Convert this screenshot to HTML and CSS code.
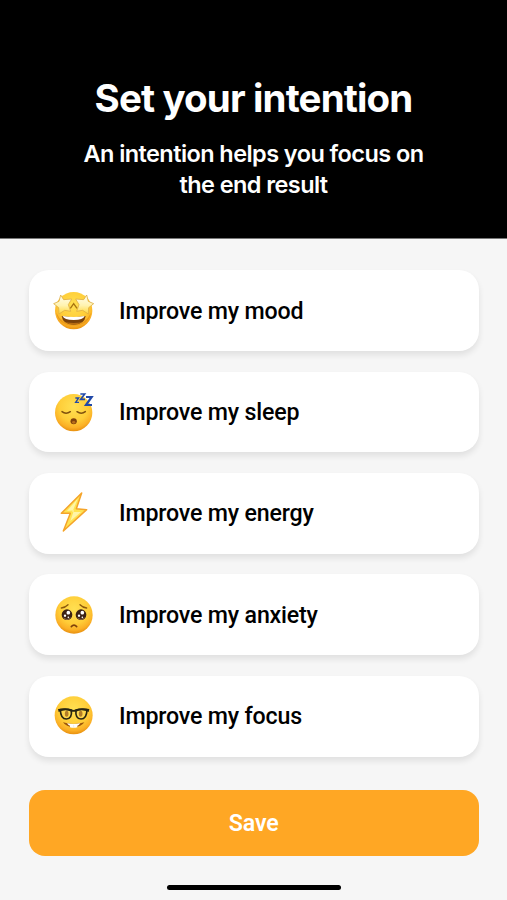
FILE: index.html
```html
<!DOCTYPE html>
<html lang="en">
<head>
    <meta charset="UTF-8">
    <meta name="viewport" content="width=device-width, initial-scale=1.0">
    <title>Set your intention</title>
    <link rel="stylesheet" href="styles.css">
</head>
<body>
    <!-- Shared gradients for the emoji -->
    <svg class="defs" width="0" height="0" aria-hidden="true">
        <defs>
            <radialGradient id="face" cx="0.5" cy="0.34" r="0.66">
                <stop offset="0" stop-color="#ffe052"/>
                <stop offset="0.6" stop-color="#ffcd38"/>
                <stop offset="0.85" stop-color="#fbb026"/>
                <stop offset="1" stop-color="#e8900f"/>
            </radialGradient>
            <linearGradient id="star" x1="0" y1="0" x2="0" y2="1">
                <stop offset="0" stop-color="#fffdee"/>
                <stop offset="0.55" stop-color="#fff3b0"/>
                <stop offset="1" stop-color="#ffd83c"/>
            </linearGradient>
        </defs>
    </svg>

    <header class="header">
        <h1>Set your intention</h1>
        <p>An intention helps you focus on<br>the end result</p>
    </header>

    <main class="content">
        <div class="options">
            <button class="option">
                <svg class="emoji" viewBox="0 0 180 180">
                    <circle cx="86" cy="89" r="56" fill="url(#face)"/>
                    <path d="M34 95A56 56 0 0 0 138 95Q132 132 86 134Q40 132 34 95Z" fill="#e08a10" fill-opacity="0.6"/>
                    <path d="M50 105Q86 112 122 105Q119 130 86 131Q53 130 50 105Z" fill="#794009"/>
                    <path d="M53 105Q86 111 119 105Q115 117 86 117Q57 117 53 105Z" fill="#fff"/>
                    <path d="M62 124Q86 128 110 124Q101 131 86 131Q71 131 62 124Z" fill="#b66b12"/>
                    <path d="M47 42L56 56L80 54L70 71L77 91L59 88L42 99L41 80L26 68L42 61Z" fill="url(#star)" stroke="#dfae45" stroke-width="2.5" stroke-linejoin="round"/>
                    <path d="M125 42L116 56L92 54L102 71L95 91L113 88L130 99L131 80L146 68L130 61Z" fill="url(#star)" stroke="#dfae45" stroke-width="2.5" stroke-linejoin="round"/>
                    <path d="M76 82L86 68L96 82" fill="none" stroke="#a8730f" stroke-width="4"/>
                </svg>
                <span>Improve my mood</span>
            </button>

            <button class="option">
                <svg class="emoji" viewBox="0 0 180 180">
                    <circle cx="86" cy="92" r="56" fill="url(#face)"/>
                    <path d="M51 89Q63 98 76 89M96 89Q109 98 121 89" fill="none" stroke="#7f500e" stroke-width="4.5" stroke-linecap="round"/>
                    <ellipse cx="86" cy="118" rx="9.5" ry="9" fill="#80420c"/>
                    <ellipse cx="86" cy="121" rx="5" ry="4" fill="#b96e1a"/>
                    <g fill="none" stroke="#2149a8" stroke-linejoin="miter">
                        <path d="M91 48H101L92 61H102" stroke-width="4"/>
                        <path d="M106 36H119L107 52H120" stroke-width="5"/>
                        <path d="M123 45H140L123 69H141" stroke-width="6.5"/>
                    </g>
                </svg>
                <span>Improve my sleep</span>
            </button>

            <button class="option">
                <svg class="emoji" viewBox="0 0 180 180">
                    <path d="M110 30L49 91L76 91L55 144L125 80L94 77Z" fill="#ffe352" stroke="#f5a42a" stroke-width="4.5" stroke-linejoin="round"/>
                    <path d="M98 47L66 84L87 82L76 114L108 87L82 87Z" fill="#fff5a8"/>
                </svg>
                <span>Improve my energy</span>
            </button>

            <button class="option">
                <svg class="emoji" viewBox="0 0 180 180">
                    <circle cx="87" cy="90" r="56" fill="url(#face)"/>
                    <path d="M49 69Q60 68 69 59M105 59Q114 68 125 69" fill="none" stroke="#8d5a0c" stroke-width="4" stroke-linecap="round"/>
                    <circle cx="66" cy="89" r="16" fill="#3b2115"/>
                    <circle cx="108" cy="89" r="16" fill="#3b2115"/>
                    <path d="M54 96Q66 108 78 96Q74 104 66 104Q58 104 54 96ZM96 96Q108 108 120 96Q116 104 108 104Q100 104 96 96Z" fill="#a98058"/>
                    <g fill="#fff">
                        <circle cx="70" cy="83" r="5.5"/>
                        <circle cx="60" cy="92" r="3.5"/>
                        <circle cx="70" cy="97" r="2.5"/>
                        <circle cx="112" cy="83" r="5.5"/>
                        <circle cx="102" cy="92" r="3.5"/>
                        <circle cx="112" cy="97" r="2.5"/>
                    </g>
                    <path d="M79 125Q87 116 95 125" fill="none" stroke="#81430a" stroke-width="5" stroke-linecap="round"/>
                </svg>
                <span>Improve my anxiety</span>
            </button>

            <button class="option">
                <svg class="emoji" viewBox="0 0 180 180">
                    <circle cx="86" cy="88" r="57" fill="url(#face)"/>
                    <ellipse cx="65" cy="83" rx="5.5" ry="9" fill="#925009"/>
                    <ellipse cx="107" cy="83" rx="5.5" ry="9" fill="#925009"/>
                    <path d="M54 109Q86 119 118 109Q109 123 86 123Q63 123 54 109Z" fill="#9c560b"/>
                    <path d="M66 112Q86 116 106 112Q101 119 97 119V124Q86 127 75 124V119Q71 119 66 112Z" fill="#fff"/>
                    <path d="M86 116V125" stroke="#ddd" stroke-width="1.5"/>
                    <path d="M46 71Q62 67 79 72Q82 98 64 99Q47 99 46 71ZM126 71Q110 67 93 72Q90 98 108 99Q125 99 126 71Z" fill="#ffe36c" fill-opacity="0.3" stroke="#292612" stroke-width="5" stroke-linejoin="round"/>
                    <path d="M39 69Q62 65 86 72Q110 65 133 69L131 78L124 75Q106 69 93 77H79Q66 69 48 75L41 78Z" fill="#292612"/>
                </svg>
                <span>Improve my focus</span>
            </button>
        </div>

        <button class="save-btn">Save</button>
        <div class="home-bar"></div>
    </main>
</body>
</html>
```
FILE: styles.css
```css
* {
    margin: 0;
    padding: 0;
    box-sizing: border-box;
}

body {
    display: flex;
    flex-direction: column;
    height: 900px;
    background-color: #f6f6f6;
    font-family: 'Roboto', sans-serif;
    overflow: hidden;
}

.defs {
    position: absolute;
}

.header {
    height: 239px;
    padding-top: 74px;
    background-color: #000;
    border-bottom: 1px solid #777;
    color: #fff;
    text-align: center;
    font-family: 'Inter', sans-serif;
}

.header h1 {
    font-size: 38.5px;
    line-height: 48px;
    font-weight: 700;
    letter-spacing: -0.86px;
    white-space: nowrap;
}

.header p {
    margin-top: 16px;
    font-size: 23.5px;
    line-height: 31px;
    font-weight: 600;
    letter-spacing: -0.57px;
    white-space: nowrap;
}

.content {
    flex: 1;
    display: flex;
    flex-direction: column;
    padding: 31.3px 28.5px 0 29px;
}

.options {
    display: flex;
    flex-direction: column;
    gap: 20.6px;
}

.option {
    display: flex;
    align-items: center;
    gap: 14px;
    height: 80.8px;
    padding-left: 16px;
    border: none;
    border-radius: 20px;
    background-color: #fff;
    box-shadow: 0 4px 6px rgba(0, 0, 0, 0.09);
    color: #000;
    font-family: inherit;
    font-size: 23.2px;
    font-weight: 500;
    letter-spacing: -0.18px;
    cursor: pointer;
}

.emoji {
    width: 60px;
    height: 60px;
}

.save-btn {
    height: 65.6px;
    margin-top: 33.8px;
    border: none;
    border-radius: 16px;
    background-color: #ffa724;
    color: #fff;
    font-family: inherit;
    font-size: 23.2px;
    font-weight: 600;
    letter-spacing: -0.1px;
    cursor: pointer;
}

.home-bar {
    align-self: center;
    width: 174px;
    height: 5px;
    margin-top: 28.6px;
    border-radius: 3px;
    background-color: #000;
}
```
